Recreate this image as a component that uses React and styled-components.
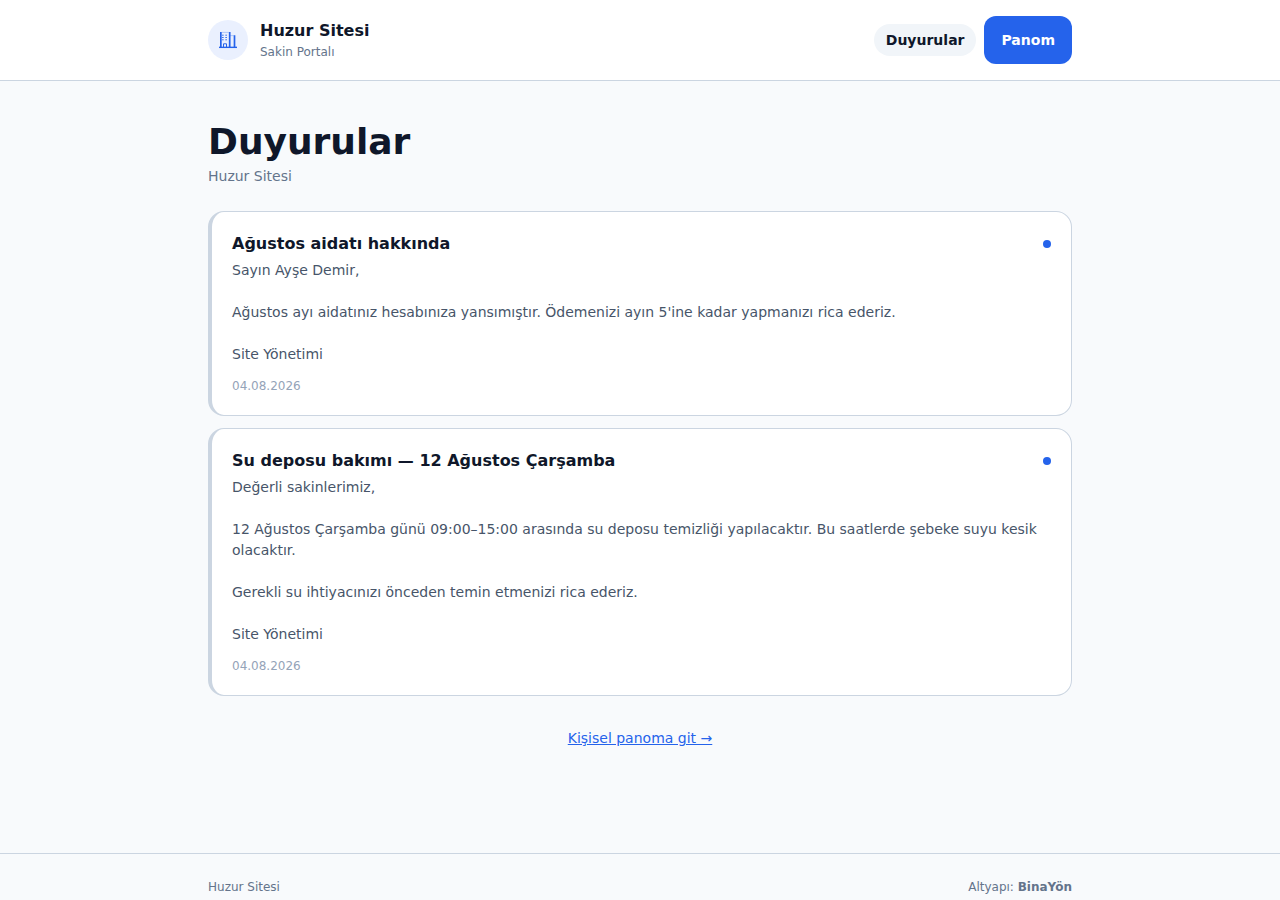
import React from 'react';
import styled, { createGlobalStyle } from 'styled-components';

const Global = createGlobalStyle`
  html, body { margin: 0; padding: 0; }
  body { background: #f8fafc; font-family: "DejaVu Sans", sans-serif; color: #0f172a; }
`;
const Page = styled.div`
  min-height: 900px; display: flex; flex-direction: column;
`;
const Header = styled.header`
  background: #fff; border-bottom: 1px solid #cbd5e1; height: 81px; box-sizing: border-box;
`;
const HeaderInner = styled.div`
  width: 864px; height: 80px; margin: 0 auto; display: flex; align-items: center; justify-content: space-between;
`;
const Brand = styled.div`
  display: flex; align-items: center; gap: 12px;
`;
const LogoCircle = styled.div`
  width: 40px; height: 40px; border-radius: 50%; background: #eaf0fe; display: flex; align-items: center; justify-content: center; color: #2563eb;
`;
const BrandText = styled.div`
  display: flex; flex-direction: column; gap: 2px;
`;
const BrandName = styled.div`
  font-size: 16px; font-weight: 700; line-height: 22px; color: #0f172a;
`;
const BrandSub = styled.div`
  font-size: 12px; line-height: 16px; color: #64748b;
`;
const Nav = styled.nav`
  display: flex; align-items: center; gap: 8px;
`;
const NavPill = styled.a`
  font-size: 14px; font-weight: 700; line-height: 20px; color: #0f172a; background: #f1f5f9; border-radius: 16px; padding: 6px 12px;
`;
const NavButton = styled.a`
  font-size: 14px; font-weight: 700; line-height: 20px; color: #fff; background: #2563eb; border-radius: 12px; padding: 14px 17px; text-align: center;
`;
const Main = styled.main`
  width: 864px; margin: 0 auto; padding-top: 36px; flex: 1;
`;
const Title = styled.h1`
  margin: 0; font-size: 36px; line-height: 50px; font-weight: 700; color: #0f172a;
`;
const Subtitle = styled.p`
  margin: 0 0 26px; font-size: 14px; line-height: 18px; color: #64748b;
`;
const List = styled.div`
  display: flex; flex-direction: column; gap: 12px;
`;
const Card = styled.article`
  background: #fff; border: 1px solid #cbd5e1; border-left: 4px solid #cbd5e1; border-radius: 16px; padding: 20px; box-sizing: border-box;
`;
const CardHead = styled.div`
  display: flex; align-items: center; justify-content: space-between; gap: 12px;
`;
const CardTitle = styled.h2`
  margin: 0; font-size: 16px; line-height: 24px; font-weight: 700; color: #0f172a;
`;
const Dot = styled.span`
  width: 8px; height: 8px; border-radius: 50%; background: #2563eb; flex: none;
`;
const Body = styled.p`
  margin: 4px 0 0; font-size: 14px; line-height: 21px; color: #475569; white-space: pre-line;
`;
const Meta = styled.div`
  margin-top: 12px; font-size: 12px; line-height: 18px; color: #94a3b8;
`;
const LinkRow = styled.div`
  margin-top: 32px; text-align: center; font-size: 14px; line-height: 20px;
`;
const PanelLink = styled.a`
  color: #2563eb; text-decoration: underline;
`;
const Footer = styled.footer`
  border-top: 1px solid #cbd5e1; height: 47px; box-sizing: border-box;
`;
const FooterInner = styled.div`
  width: 864px; margin: 0 auto; padding-top: 24px; display: flex; justify-content: space-between; font-size: 12px; line-height: 18px; color: #64748b;
`;

const BuildingIcon = () => (
  <svg width="20" height="20" viewBox="0 0 20 20" fill="none" stroke="currentColor" aria-hidden="true">
    <path d="M1 17.35h18" strokeWidth="1.4" />
    <path d="M2.85 2v15.4M11.7 2v15.4M16.5 5.3v12.1" strokeWidth="1.7" />
    <path d="M3.7 2.4h7M11.7 5.6h4" strokeWidth=".6" opacity=".5" />
    <path d="M4 5.2h1.7M7.3 5.2H9M4 7.5h1.7M7.3 7.5H9M4 9.8h1.7M7.3 9.8H9" strokeWidth="1" opacity=".85" />
    <path d="M5.5 17v-3.2h3V17" strokeWidth="1" />
  </svg>
);

export default function App() {
  return (
    <Page>
      <Global />
      <Header>
        <HeaderInner>
          <Brand>
            <LogoCircle><BuildingIcon /></LogoCircle>
            <BrandText>
              <BrandName>Huzur Sitesi</BrandName>
              <BrandSub>Sakin Portalı</BrandSub>
            </BrandText>
          </Brand>
          <Nav>
            <NavPill>Duyurular</NavPill>
            <NavButton>Panom</NavButton>
          </Nav>
        </HeaderInner>
      </Header>
      <Main>
        <Title>Duyurular</Title>
        <Subtitle>Huzur Sitesi</Subtitle>
        <List>
          <Card>
            <CardHead><CardTitle>Ağustos aidatı hakkında</CardTitle><Dot /></CardHead>
            <Body>{`Sayın Ayşe Demir,

Ağustos ayı aidatınız hesabınıza yansımıştır. Ödemenizi ayın 5'ine kadar yapmanızı rica ederiz.

Site Yönetimi`}</Body>
            <Meta>04.08.2026</Meta>
          </Card>
          <Card>
            <CardHead><CardTitle>Su deposu bakımı — 12 Ağustos Çarşamba</CardTitle><Dot /></CardHead>
            <Body>{`Değerli sakinlerimiz,

12 Ağustos Çarşamba günü 09:00–15:00 arasında su deposu temizliği yapılacaktır. Bu saatlerde şebeke suyu kesik olacaktır.

Gerekli su ihtiyacınızı önceden temin etmenizi rica ederiz.

Site Yönetimi`}</Body>
            <Meta>04.08.2026</Meta>
          </Card>
        </List>
        <LinkRow><PanelLink href="#">Kişisel panoma git →</PanelLink></LinkRow>
      </Main>
      <Footer>
        <FooterInner>
          <span>Huzur Sitesi</span>
          <span>Altyapı: <b>BinaYön</b></span>
        </FooterInner>
      </Footer>
    </Page>
  );
}
